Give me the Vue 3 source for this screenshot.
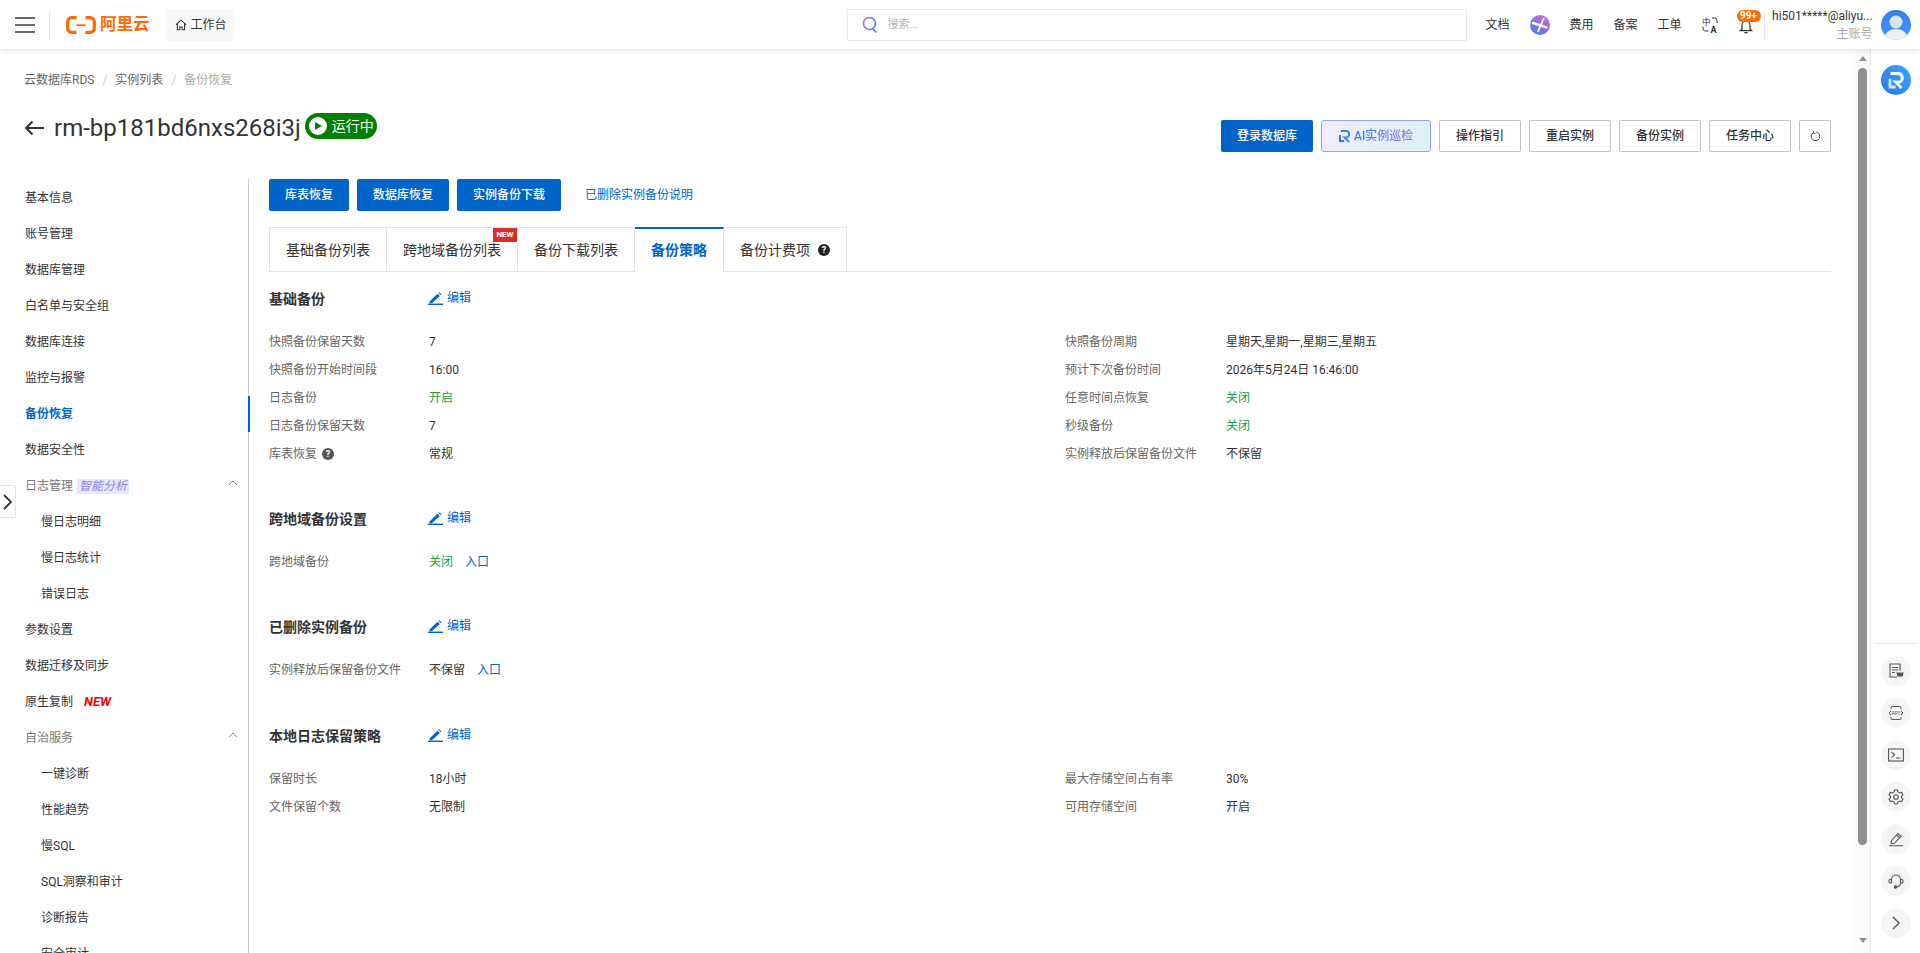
<script setup>
const navItems = [
  { label: '基本信息' },
  { label: '账号管理' },
  { label: '数据库管理' },
  { label: '白名单与安全组' },
  { label: '数据库连接' },
  { label: '监控与报警' },
  { label: '备份恢复', active: true },
  { label: '数据安全性' },
  { label: '日志管理', group: true, tag: '智能分析' },
  { label: '慢日志明细', child: true },
  { label: '慢日志统计', child: true },
  { label: '错误日志', child: true },
  { label: '参数设置' },
  { label: '数据迁移及同步' },
  { label: '原生复制', isNew: true },
  { label: '自治服务', group: true },
  { label: '一键诊断', child: true },
  { label: '性能趋势', child: true },
  { label: '慢SQL', child: true },
  { label: 'SQL洞察和审计', child: true },
  { label: '诊断报告', child: true },
  { label: '安全审计', child: true }
]

const tabs = [
  { label: '基础备份列表' },
  { label: '跨地域备份列表', badge: true },
  { label: '备份下载列表' },
  { label: '备份策略', active: true },
  { label: '备份计费项', help: true }
]

const actions = ['操作指引', '重启实例', '备份实例', '任务中心']

const sections = [
  {
    title: '基础备份',
    rows: [
      { label: '快照备份保留天数', value: '7' },
      { label: '快照备份周期', value: '星期天,星期一,星期三,星期五' },
      { label: '快照备份开始时间段', value: '16:00' },
      { label: '预计下次备份时间', value: '2026年5月24日 16:46:00' },
      { label: '日志备份', value: '开启', on: true },
      { label: '任意时间点恢复', value: '关闭', on: true },
      { label: '日志备份保留天数', value: '7' },
      { label: '秒级备份', value: '关闭', on: true },
      { label: '库表恢复', value: '常规', help: true },
      { label: '实例释放后保留备份文件', value: '不保留' }
    ]
  },
  {
    title: '跨地域备份设置',
    rows: [{ label: '跨地域备份', value: '关闭', on: true, link: '入口' }]
  },
  {
    title: '已删除实例备份',
    rows: [{ label: '实例释放后保留备份文件', value: '不保留', link: '入口' }]
  },
  {
    title: '本地日志保留策略',
    rows: [
      { label: '保留时长', value: '18小时' },
      { label: '最大存储空间占有率', value: '30%' },
      { label: '文件保留个数', value: '无限制' },
      { label: '可用存储空间', value: '开启' }
    ]
  }
]
</script>

<template>
  <div class="app">
    <header class="topbar">
      <div class="burger"><i></i><i></i><i></i></div>
      <div class="top-divider"></div>
      <div class="logo">
        <svg width="30" height="18" viewBox="0 0 30 18" fill="none" stroke="#ff6a00">
          <path d="M10.5 1.7H5.5a3.8 3.8 0 0 0-3.8 3.8v7a3.8 3.8 0 0 0 3.8 3.8h5" stroke-width="3.2" />
          <path d="M19.5 1.7h5a3.8 3.8 0 0 1 3.8 3.8v7a3.8 3.8 0 0 1-3.8 3.8h-5" stroke-width="3.2" />
          <path d="M10.5 9.2h9" stroke-width="1.8" />
        </svg>
        <span>阿里云</span>
      </div>
      <div class="workbench">
        <svg width="12" height="12" viewBox="0 0 12 12" fill="none" stroke="#333" stroke-width="1.1">
          <path d="M1 5.6 6 1.2l5 4.4M2.4 4.6v6.2h2.4V8h2.4v2.8h2.4V4.6" />
        </svg>
        <span>工作台</span>
      </div>
      <div class="search">
        <svg width="16" height="18" viewBox="0 0 16 18" fill="none">
          <defs>
            <linearGradient id="searchGrad" x1="0" y1="0" x2="1" y2="1">
              <stop offset="0" stop-color="#b06bd8" />
              <stop offset="1" stop-color="#3b82f6" />
            </linearGradient>
          </defs>
          <circle cx="7.5" cy="7.5" r="6" stroke="url(#searchGrad)" stroke-width="1.6" />
          <path d="m11 12.5 3 4" stroke="#3b82f6" stroke-width="1.6" />
        </svg>
        <span>搜索...</span>
      </div>
      <nav class="top-links">
        <span>文档</span>
        <svg class="star" width="20" height="20" viewBox="0 0 20 20" fill="none">
          <defs>
            <linearGradient id="starGrad" x1="0.9" y1="0" x2="0.2" y2="1">
              <stop offset="0" stop-color="#d86fc0" />
              <stop offset="0.55" stop-color="#8a6ee8" />
              <stop offset="1" stop-color="#3d7df5" />
            </linearGradient>
          </defs>
          <circle cx="10" cy="10" r="10" fill="url(#starGrad)" />
          <path d="M13.800 3.500 8 16.500" stroke="#fff" stroke-width="1.800" stroke-linecap="round" />
          <path d="M3 8l13.500 4.300" stroke="#fff" stroke-width="2.400" stroke-linecap="round" />
        </svg>
        <span>费用</span>
        <span>备案</span>
        <span>工单</span>
        <svg class="lang" width="16" height="16" viewBox="0 0 16 16" fill="none" stroke="#333" stroke-width="1">
          <text x="0" y="8" font-size="8.500" fill="#222" stroke="none" font-family="'Noto Sans CJK SC', sans-serif">中</text>
          <text x="8.500" y="15.500" font-size="9" font-weight="700" fill="#333" stroke="none" font-family="Roboto, sans-serif">A</text>
          <path d="M10 1h2.500a2.500 2.500 0 0 1 2.500 2.500V6M1 9.500v2A2.500 2.500 0 0 0 3.500 14H6.500" />
        </svg>
        <div class="bell">
          <svg width="14" height="15" viewBox="0 0 14 15" fill="none" stroke="#333" stroke-width="1.200">
            <path d="M3 10V6.200a4 4 0 0 1 8 0V10l1.600 1.600H1.400zM5.400 13.600h3.200" />
          </svg>
          <b>99+</b>
        </div>
      </nav>
      <div class="user-divider"></div>
      <div class="user">
        <span class="user-name">hi501*****@aliyu...</span>
        <span class="user-role">主账号</span>
      </div>
      <svg class="avatar" width="30" height="30" viewBox="0 0 30 30">
        <defs>
          <clipPath id="avatarClip"><circle cx="15" cy="15" r="15" /></clipPath>
          <linearGradient id="avatarGrad" x1="0" y1="0" x2="0" y2="1">
            <stop offset="0" stop-color="#2f7fef" />
            <stop offset="1" stop-color="#4c96f5" />
          </linearGradient>
        </defs>
        <g clip-path="url(#avatarClip)">
          <rect width="30" height="30" fill="url(#avatarGrad)" />
          <circle cx="15" cy="12" r="6.500" fill="#dfe3e8" />
          <ellipse cx="15" cy="27" rx="11" ry="8" fill="#eceef1" />
        </g>
      </svg>
    </header>

    <div class="layout">
      <main class="page">
        <div class="crumbs">
          <span>云数据库RDS</span>
          <em>/</em>
          <span>实例列表</span>
          <em>/</em>
          <span class="crumb-current">备份恢复</span>
        </div>

        <div class="head">
          <div class="head-title">
            <svg width="20" height="16" viewBox="0 0 20 16" fill="none" stroke="#333" stroke-width="2">
              <path d="M20 8H2M8.500 1.500 2 8l6.500 6.500" />
            </svg>
            <h1>rm-bp181bd6nxs268i3j</h1>
            <div class="status">
              <span class="status-dot"><i></i></span>
              <span>运行中</span>
            </div>
          </div>
          <div class="head-actions">
            <button class="btn primary">登录数据库</button>
            <button class="btn ai">
              <svg width="12" height="14" viewBox="0 0 12 14" fill="none" stroke-width="2">
                <path d="M3 2h5a3 3 0 0 1 0 6.400H6.500L11 13" stroke="#3d86e6" />
                <path d="M2 6v6h4" stroke="#2f78e0" />
              </svg>
              <span>AI实例巡检</span>
            </button>
            <button v-for="a in actions" :key="a" class="btn">{{ a }}</button>
            <button class="btn icon-btn">
              <svg width="11" height="11" viewBox="0 0 11 11" fill="none" stroke="#444" stroke-width="1">
                <path d="M6.500 1.200a4.300 4.300 0 1 1-3 .4" />
                <path d="M3.600 .2v2.200h2" stroke-width=".8" />
              </svg>
            </button>
          </div>
        </div>

        <div class="body">
          <aside class="side">
            <div
              v-for="item in navItems"
              :key="item.label"
              class="side-item"
              :class="{ active: item.active, child: item.child, group: item.group }"
            >
              <span>{{ item.label }}</span>
              <span v-if="item.tag" class="side-tag">{{ item.tag }}</span>
              <span v-if="item.isNew" class="side-new">NEW</span>
              <svg v-if="item.group" class="side-arrow" width="10" height="6" viewBox="0 0 10 6" fill="none" stroke="#888">
                <path d="M1 5 5 1l4 4" />
              </svg>
            </div>
          </aside>

          <section class="content">
            <div class="toolbar">
              <button class="btn primary">库表恢复</button>
              <button class="btn primary">数据库恢复</button>
              <button class="btn primary">实例备份下载</button>
              <a class="deleted-link">已删除实例备份说明</a>
            </div>

            <div class="tabs">
              <div v-for="t in tabs" :key="t.label" class="tab" :class="{ active: t.active }">
                <span>{{ t.label }}</span>
                <span v-if="t.help" class="help dark">?</span>
                <span v-if="t.badge" class="tab-badge">NEW</span>
              </div>
            </div>

            <div v-for="s in sections" :key="s.title" class="block">
              <div class="block-title">
                <h3>{{ s.title }}</h3>
                <a class="edit">
                  <svg width="15" height="13" viewBox="0 0 15 13" fill="#0064c8">
                    <path d="M1.500 9.500 9.500 1.800l2.400 2.200-8 7.300H1.500zM10.400 1l.9-.8 2.300 2.200-.8.800z" />
                    <rect y="11.600" width="15" height="1.400" />
                  </svg>
                  <span>编辑</span>
                </a>
              </div>
              <div class="grid">
                <template v-for="r in s.rows" :key="r.label">
                  <div class="cell-label">
                    {{ r.label }}
                    <span v-if="r.help" class="help">?</span>
                  </div>
                  <div class="cell-value">
                    <span :class="{ green: r.on }">{{ r.value }}</span>
                    <a v-if="r.link" class="entry">{{ r.link }}</a>
                  </div>
                </template>
              </div>
            </div>
          </section>
        </div>

        <div class="side-toggle">
          <svg width="9" height="16" viewBox="0 0 9 16" fill="none" stroke="#333" stroke-width="1.800">
            <path d="m1 1 7 7-7 7" />
          </svg>
        </div>
      </main>

      <div class="scrollbar">
        <i class="arrow up"></i>
        <div class="thumb"></div>
        <i class="arrow down"></i>
      </div>

      <aside class="rail">
        <svg class="rail-logo" width="30" height="30" viewBox="0 0 30 30" fill="none">
          <defs>
            <linearGradient id="railGrad" x1="0" y1="1" x2="1" y2="0">
              <stop offset="0" stop-color="#2c74e6" />
              <stop offset="1" stop-color="#38aafc" />
            </linearGradient>
          </defs>
          <circle cx="15" cy="15" r="15" fill="url(#railGrad)" />
          <path d="M9.500 8.500H17a4.400 4.400 0 0 1 1.200 8.600L14.500 17l6 6" stroke="#fff" stroke-width="2.800" />
          <path d="M9 14v8h5.500" stroke="#cfe6ff" stroke-width="2.800" />
        </svg>
        <div class="rail-divider"></div>
        <div class="rail-icons">
          <div class="rail-btn">
            <svg width="16" height="16" viewBox="0 0 16 16" fill="none" stroke="#555" stroke-width="1.100">
              <path d="M9 14H2V1h10v7M4 4.500h6M4 7h6M4 9.500h3" />
              <path d="M9 10h6l-.8 3H10zM10.500 15h.1M13.500 15h.1" fill="#555" />
            </svg>
          </div>
          <div class="rail-btn">
            <svg width="16" height="16" viewBox="0 0 16 16" fill="none" stroke="#555" stroke-width="1">
              <text x="3.200" y="10" font-size="5.500" fill="#555" stroke="none" font-family="Roboto, sans-serif">API</text>
              <path d="M3 4V2.500A1 1 0 0 1 4 1.500h8a1 1 0 0 1 1 1V4M3 12v1.500a1 1 0 0 0 1 1h8a1 1 0 0 0 1-1V12M3 6 1 8l2 2M13 6l2 2-2 2" />
            </svg>
          </div>
          <div class="rail-btn">
            <svg width="16" height="14" viewBox="0 0 16 14" fill="none" stroke="#555" stroke-width="1.100">
              <rect x=".6" y="1" width="14.800" height="12" />
              <path d="m3.500 4 3 2.800-3 2.800M8 10h4.500" />
            </svg>
          </div>
          <div class="rail-btn">
            <svg width="16" height="16" viewBox="0 0 16 16" fill="none" stroke="#555" stroke-width="1.100">
              <path d="m6.600 1h2.800l.5 2 1.700 1 2-.6 1.400 2.400-1.500 1.400v1.600l1.500 1.400-1.400 2.400-2-.6-1.700 1-.5 2H6.600l-.5-2-1.700-1-2 .6L1 10.200l1.500-1.400V7.200L1 5.800l1.400-2.400 2 .6 1.700-1z" />
              <circle cx="8" cy="8" r="2.300" />
            </svg>
          </div>
          <div class="rail-btn">
            <svg width="16" height="16" viewBox="0 0 16 16" fill="none" stroke="#555" stroke-width="1.100">
              <path d="m3.500 9.500 6.500-7 3 2.800-6.500 7-3.500.4zM8.700 4l3 2.800M1 14.800h14" />
            </svg>
          </div>
          <div class="rail-btn">
            <svg width="16" height="16" viewBox="0 0 16 16" fill="none" stroke="#555" stroke-width="1.100">
              <path d="M3.500 10V6.500a4.500 4.500 0 0 1 9 0V10a4 4 0 0 1-4 4" />
              <rect x="1" y="6.500" width="2.500" height="3.500" rx="1" />
              <rect x="12.500" y="6.500" width="2.500" height="3.500" rx="1" />
              <circle cx="7.500" cy="14" r="1.200" fill="#555" />
            </svg>
          </div>
          <div class="rail-btn">
            <svg width="8" height="14" viewBox="0 0 8 14" fill="none" stroke="#555" stroke-width="1.400">
              <path d="m1 1 6 6-6 6" />
            </svg>
          </div>
        </div>
      </aside>
    </div>
  </div>
</template>

<style>
html,
body {
  margin: 0;
  background: #fff;
}
</style>

<style scoped>
.app {
  width: 1920px;
  height: 953px;
  overflow: hidden;
  display: flex;
  flex-direction: column;
  font-family: Roboto, "Noto Sans CJK SC", sans-serif;
  font-size: 12px;
  line-height: 18px;
  color: #333;
  background: #fff;
}

.topbar {
  height: 49px;
  flex: none;
  display: flex;
  align-items: center;
  padding-left: 15px;
  background: #fff;
  box-shadow: 0 1px 6px rgba(0, 0, 0, 0.12);
  position: relative;
  z-index: 5;
}

.burger {
  width: 20px;
  display: flex;
  flex-direction: column;
  gap: 5px;
}

.burger i {
  height: 2px;
  background: #6b6b6b;
}

.top-divider {
  width: 1px;
  height: 30px;
  margin-left: 14px;
  background: #e8e9ee;
}

.logo {
  display: flex;
  align-items: center;
  gap: 4px;
  margin-left: 16px;
  color: #ff6a00;
  font-size: 16.500px;
  font-weight: 700;
  line-height: 18px;
}

.workbench {
  display: flex;
  align-items: center;
  gap: 4px;
  width: 70px;
  height: 32px;
  box-sizing: border-box;
  padding-left: 10px;
  margin-left: 15px;
  background: #f7f8fa;
  border-radius: 2px;
}

.search {
  display: flex;
  align-items: center;
  gap: 10px;
  width: 620px;
  height: 32px;
  box-sizing: border-box;
  padding-left: 14px;
  margin-left: 612px;
  border: 1px solid #e6e8ec;
  color: #b5b5b5;
  font-size: 11px;
}

.top-links {
  display: flex;
  align-items: center;
  gap: 20px;
  margin-left: 19px;
}

.star {
  display: block;
}

.bell {
  position: relative;
  width: 14px;
  height: 15px;
  margin-left: 1px;
  margin-top: 4px;
}

.bell b {
  position: absolute;
  left: -2px;
  top: -9px;
  width: 24px;
  height: 12px;
  border-radius: 6px;
  background: #ff6a00;
  color: #fff;
  font-size: 10px;
  line-height: 12px;
  text-align: center;
}

.user-divider {
  width: 1px;
  height: 30px;
  margin-left: 11px;
  background: #e8e9ee;
}

.user {
  width: 99px;
  margin-left: 9px;
  display: flex;
  flex-direction: column;
  align-items: flex-end;
  gap: 2px;
  line-height: 16px;
  white-space: nowrap;
}

.user-role {
  color: #aaa;
}

.avatar {
  margin-left: 8px;
}

.layout {
  flex: 1;
  min-height: 0;
  display: flex;
}

.page {
  flex: 1;
  min-width: 0;
  position: relative;
  box-sizing: border-box;
  padding: 22px 24px 0;
  overflow: hidden;
}

.crumbs {
  display: flex;
  align-items: center;
  height: 18px;
  color: #666;
}

.crumbs em {
  margin: 0 8px;
  font-style: normal;
  color: #ccc;
}

.crumb-current {
  color: #aaa;
}

.head {
  display: flex;
  justify-content: space-between;
  align-items: flex-start;
  margin-top: 22px;
  height: 68px;
}

.head-title {
  display: flex;
  align-items: center;
  height: 30px;
}

.head-title > svg {
  margin-top: 4px;
}

.head-title h1 {
  margin: 3px 4px 0 10px;
  font-size: 24px;
  font-weight: 400;
  line-height: 30px;
  color: #333;
}

.status {
  display: flex;
  align-items: center;
  gap: 5px;
  height: 26px;
  padding: 0 3px 0 4px;
  border-radius: 13px;
  background: #008000;
  color: #fff;
  font-size: 14px;
}

.status-dot {
  width: 18px;
  height: 18px;
  border-radius: 50%;
  background: #fff;
  display: flex;
  align-items: center;
  justify-content: center;
}

.status-dot i {
  width: 0;
  height: 0;
  margin-left: 2px;
  border-left: 7px solid #008000;
  border-top: 4.500px solid transparent;
  border-bottom: 4.500px solid transparent;
}

.head-actions {
  display: flex;
  gap: 8px;
  margin-top: 9px;
}

.btn {
  height: 32px;
  box-sizing: border-box;
  padding: 0 16px;
  border: 1px solid #c0c6cc;
  border-radius: 2px;
  background: #fff;
  color: #333;
  font-family: inherit;
  font-size: 12px;
  font-weight: 500;
  line-height: 18px;
  white-space: nowrap;
}

.btn.primary {
  border: 0;
  background: #0064c8;
  color: #fff;
}

.btn.ai {
  display: flex;
  align-items: center;
  gap: 4px;
  width: 110px;
  border-color: #8fa3f5;
  border-radius: 3px;
  background: linear-gradient(90deg, #efecfc, #dff1fa);
}

.btn.ai span {
  background: linear-gradient(90deg, #2f7fe6, #a07ff0);
  -webkit-background-clip: text;
  background-clip: text;
  color: transparent;
}

.btn.icon-btn {
  width: 32px;
  padding: 0;
  display: flex;
  align-items: center;
  justify-content: center;
}

.body {
  display: flex;
  height: 774px;
}

.side {
  width: 225px;
  flex: none;
  box-sizing: border-box;
  padding-top: 1px;
  border-right: 1px solid #c8ccd4;
}

.side-item {
  height: 36px;
  display: flex;
  align-items: center;
  position: relative;
  padding-left: 1px;
  color: #333;
}

.side-item.child {
  padding-left: 17px;
}

.side-item.group {
  color: #777;
}

.side-item.active {
  color: #0064c8;
  font-weight: 700;
}

.side-item.active::after {
  content: "";
  position: absolute;
  right: -2px;
  top: 0;
  bottom: 0;
  width: 2px;
  background: #0064c8;
}

.side-tag {
  margin-left: 4px;
  height: 15px;
  padding: 0 2px;
  line-height: 15px;
  font-style: italic;
  color: #8a84e8;
  background: linear-gradient(90deg, #e9e8fb, #e0ecfa);
}

.side-new {
  margin-left: 11px;
  font-size: 13px;
  font-weight: 700;
  font-style: italic;
  color: #f00;
}

.side-arrow {
  position: absolute;
  left: 204px;
  top: 12px;
}

.content {
  flex: 1;
  min-width: 0;
  padding-left: 20px;
}

.toolbar {
  display: flex;
  align-items: center;
  gap: 8px;
}

.deleted-link {
  margin-left: 16px;
  color: #0064c8;
}

.tabs {
  display: flex;
  height: 45px;
  margin-top: 16px;
  box-sizing: border-box;
  border-bottom: 1px solid #e3e4e6;
}

.tab {
  position: relative;
  display: flex;
  align-items: center;
  gap: 6px;
  height: 45px;
  box-sizing: border-box;
  padding: 0 16px;
  border: 1px solid #e3e4e6;
  border-left-width: 0;
  font-size: 14px;
  color: #333;
}

.tab:first-child {
  border-left-width: 1px;
}

.tab.active {
  border-top: 2px solid #0064c8;
  border-bottom-color: #fff;
  color: #0064c8;
  font-weight: 700;
}

.tab-badge {
  position: absolute;
  right: 0;
  top: 0;
  width: 24px;
  height: 14px;
  background: #d93026;
  color: #fff;
  font-size: 8px;
  font-weight: 700;
  line-height: 14px;
  text-align: center;
}

.help {
  display: inline-block;
  width: 12px;
  height: 12px;
  margin-left: 2px;
  border-radius: 50%;
  background: #555;
  color: #fff;
  font-size: 9px;
  font-weight: 700;
  line-height: 12px;
  text-align: center;
  vertical-align: 1px;
}

.help.dark {
  background: #222;
}

.block {
  margin-top: 37px;
}

.tabs + .block {
  margin-top: 13px;
}

.block:last-child {
  margin-top: 38px;
}

.block-title {
  display: flex;
  align-items: center;
  height: 28px;
}

.block-title h3 {
  width: 159px;
  margin: 0;
  font-size: 14px;
  font-weight: 700;
  color: #333;
}

.edit {
  display: flex;
  align-items: center;
  gap: 4px;
  margin-top: -2px;
  color: #0064c8;
}

.grid {
  display: grid;
  grid-template-columns: 160px 636px 161px 1fr;
  grid-auto-rows: 28px;
  align-items: center;
  margin-top: 15px;
}

.cell-label {
  color: #666;
}

.cell-value {
  color: #333;
}

.green {
  color: #1b9e3e;
}

.entry {
  margin-left: 12px;
  color: #0064c8;
}

.side-toggle {
  position: absolute;
  left: 0;
  top: 436px;
  width: 16px;
  height: 33px;
  box-sizing: border-box;
  display: flex;
  align-items: center;
  justify-content: center;
  background: #fff;
  border: 1px solid #e3e4e6;
  border-left: 0;
  border-radius: 0 2px 2px 0;
}

.scrollbar {
  width: 15px;
  flex: none;
  display: flex;
  flex-direction: column;
  align-items: center;
  background: #fbfbfb;
}

.thumb {
  width: 9px;
  height: 777px;
  margin-top: 7px;
  border-radius: 5px;
  background: #8f8f8f;
}

.arrow {
  width: 0;
  height: 0;
  border-left: 4.500px solid transparent;
  border-right: 4.500px solid transparent;
}

.arrow.up {
  margin-top: 7px;
  border-bottom: 5px solid #909090;
}

.arrow.down {
  margin-top: 93px;
  border-top: 5px solid #909090;
}

.rail {
  width: 50px;
  flex: none;
  box-sizing: border-box;
  border-left: 1px solid #e8e9ee;
  display: flex;
  flex-direction: column;
  align-items: center;
}

.rail-logo {
  margin-top: 16px;
}

.rail-divider {
  width: 41px;
  height: 1px;
  margin-top: 548px;
  background: #e8e9ee;
}

.rail-icons {
  display: flex;
  flex-direction: column;
  gap: 12px;
  margin-top: 12px;
}

.rail-btn {
  width: 30px;
  height: 30px;
  border-radius: 50%;
  background: #f4f5f7;
  display: flex;
  align-items: center;
  justify-content: center;
}
</style>
